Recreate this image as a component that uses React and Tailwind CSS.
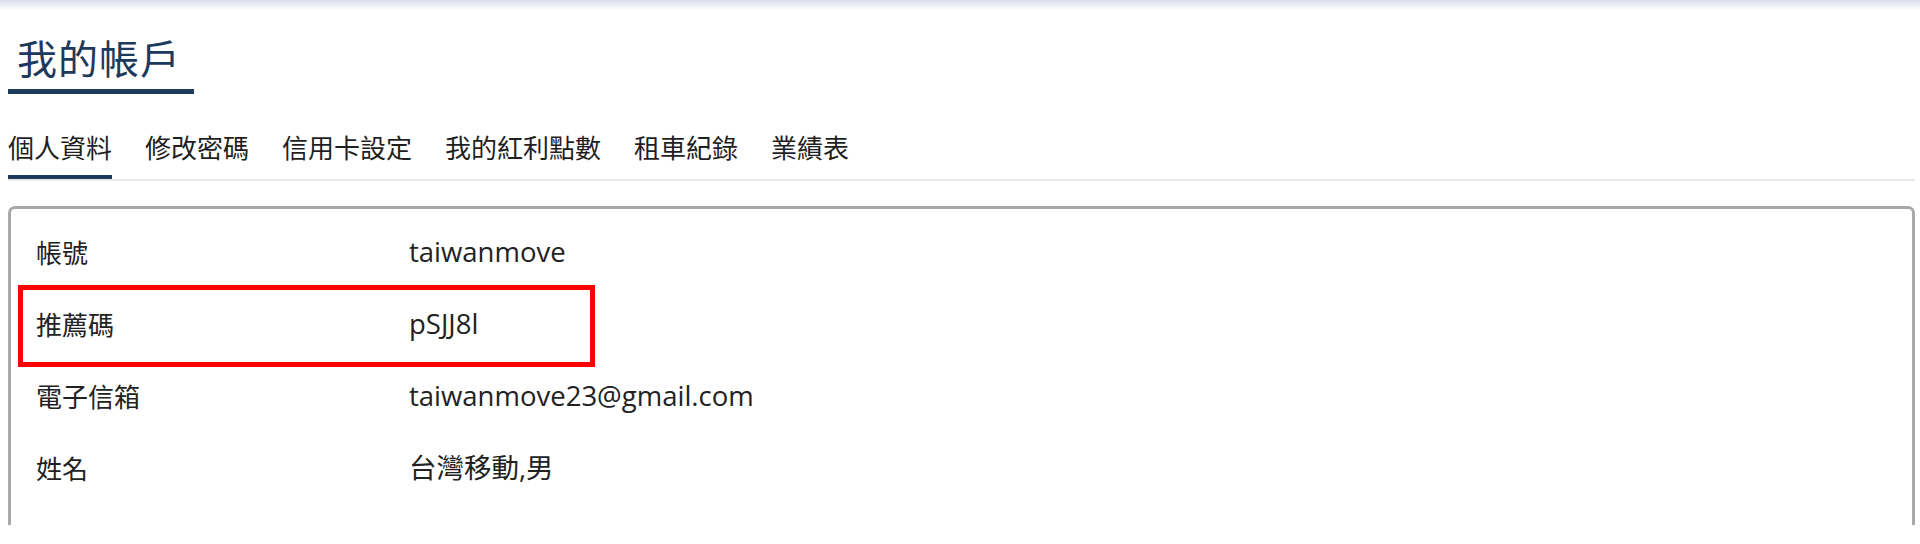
import React from "react";

const tabs = ["個人資料", "修改密碼", "信用卡設定", "我的紅利點數", "租車紀錄", "業績表"];

const rows = [
  { label: "帳號", value: "taiwanmove" },
  { label: "推薦碼", value: "pSJJ8l", highlight: true },
  { label: "電子信箱", value: "taiwanmove23@gmail.com" },
  { label: "姓名", value: "台灣移動,男" },
];

export default function App() {
  return (
    <div className="w-[1920px] h-[544px] bg-white overflow-hidden font-['Open_Sans','Noto_Sans_CJK_TC',sans-serif]">
      <div className="h-[10px] bg-linear-to-b from-[#d8dbec] to-white" />
      <div className="pl-[8px] pr-[5px]">
        <div className="mt-[27px] w-[186px] pl-[9px] pb-[12px] border-b-[5px] border-[#1d3a5c]">
          <h1 className="text-[40px] leading-[40px] tracking-[1px] text-[#1d3a5c] font-['Noto_Sans_CJK_TC',sans-serif] font-normal">
            我的帳戶
          </h1>
        </div>

        <div className="mt-[40px] flex gap-[33px] border-b-2 border-[#e8e8e8]">
          {tabs.map((t, i) => (
            <div
              key={t}
              className={
                i === 0
                  ? "pb-[15px] border-b-4 border-[#1d3a5c] text-[26px] leading-[26px] text-[#1f1f1f] font-['Noto_Sans_CJK_TC',sans-serif]"
                  : "pb-[15px] border-b-4 border-transparent text-[26px] leading-[26px] text-[#1f1f1f] font-['Noto_Sans_CJK_TC',sans-serif]"
              }
            >
              {t}
            </div>
          ))}
        </div>

        <div className="mt-[25px] h-[319px] border-[3px] border-b-0 border-[#a8a8a8] rounded-t-[7px] pt-[7px]">
          {rows.map((r) => (
            <div key={r.label} className="relative flex items-center h-[72px] pl-[25px]">
              {r.highlight && (
                <div className="absolute -top-[3px] left-[7px] w-[577px] h-[82px] border-[5px] border-[#ff0000]" />
              )}
              <div className="w-[373px] text-[26px] leading-[26px] text-[#222] font-['Noto_Sans_CJK_TC',sans-serif]">
                {r.label}
              </div>
              <div className="text-[27.5px] leading-[28px] text-[#222] font-['Open_Sans','Noto_Sans_CJK_TC',sans-serif]">
                {r.value}
              </div>
            </div>
          ))}
        </div>
      </div>
    </div>
  );
}
